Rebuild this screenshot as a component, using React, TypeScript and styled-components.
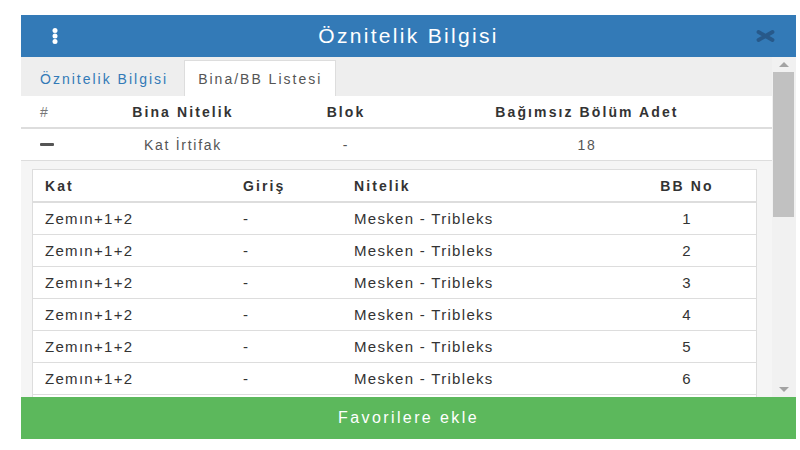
import styled, { createGlobalStyle } from 'styled-components';

const GlobalStyle = createGlobalStyle`
  html, body {
    margin: 0;
    padding: 0;
    background: #fff;
  }
  body {
    font-family: 'Liberation Sans', Arial, Helvetica, sans-serif;
    color: #333;
  }
`;

const Page = styled.div`
  padding: 15px 4px 0 21px;
`;

const Modal = styled.div`
  width: 775px;
  display: flex;
  flex-direction: column;
  background: #fff;
`;

const Header = styled.div`
  height: 42px;
  display: grid;
  grid-template-columns: 68px 1fr 68px;
  align-items: center;
  background: #337ab7;
  color: #fff;
`;

const Title = styled.h4`
  margin: 0;
  text-align: center;
  font-size: 21px;
  font-weight: normal;
  letter-spacing: 2.3px;
`;

const IconSlot = styled.div<{ $end?: boolean }>`
  display: flex;
  justify-content: ${p => (p.$end ? 'flex-end' : 'center')};
  padding-right: ${p => (p.$end ? '21px' : '0')};
  align-items: center;
`;

const Body = styled.div`
  height: 340px;
  display: flex;
`;

const Content = styled.div`
  flex: 1;
  overflow-y: auto;
  scrollbar-width: none;
`;

const TabBar = styled.div`
  height: 39px;
  background: #eee;
  display: flex;
  align-items: flex-end;
  padding-left: 5px;
`;

const Tab = styled.div<{ $active?: boolean }>`
  height: 36px;
  display: flex;
  align-items: center;
  padding: 0 13px;
  margin-right: 2px;
  font-size: 14px;
  letter-spacing: 2px;
  box-sizing: border-box;
  color: ${p => (p.$active ? '#555' : '#337ab7')};
  background: ${p => (p.$active ? '#fff' : 'transparent')};
  border: 1px solid ${p => (p.$active ? '#ddd' : 'transparent')};
  border-bottom: none;
`;

const OuterRow = styled.div<{ $head?: boolean }>`
  display: grid;
  grid-template-columns: 90px 144px 182px 300px;
  align-items: center;
  height: 31px;
  border-bottom: ${p => (p.$head ? '2px' : '1px')} solid #ddd;
  font-size: 14px;
  letter-spacing: ${p => (p.$head ? '2.1px' : '1.7px')};
  font-weight: ${p => (p.$head ? 'bold' : 'normal')};
  color: ${p => (p.$head ? '#333' : '#555')};
`;

const OuterCell = styled.div<{ $left?: boolean }>`
  padding-left: ${p => (p.$left ? '19px' : '0')};
  display: flex;
  justify-content: ${p => (p.$left ? 'flex-start' : 'center')};
  align-items: center;
  white-space: nowrap;
`;

const HashMark = styled.span`
  color: #777;
  font-weight: normal;
`;

const Minus = styled.span`
  display: block;
  width: 14px;
  height: 3px;
  background: #555;
  border-radius: 1px;
`;

const Panel = styled.div`
  background: #f5f5f5;
  padding: 8px 15px 8px 11px;
`;

const InnerTable = styled.div`
  background: #fff;
  border: 1px solid #ddd;
`;

const InnerRow = styled.div<{ $head?: boolean }>`
  display: grid;
  grid-template-columns: 198px 111px 276px 1fr;
  align-items: center;
  height: 31px;
  border-bottom: ${p => (p.$head ? '2px' : '1px')} solid #ddd;
  font-size: ${p => (p.$head ? '14px' : '15px')};
  letter-spacing: ${p => (p.$head ? '2.1px' : '1.3px')};
  font-weight: ${p => (p.$head ? 'bold' : 'normal')};
  color: #333;
`;

const InnerCell = styled.div<{ $center?: boolean }>`
  padding: ${p => (p.$center ? '0' : '0 12px')};
  text-align: ${p => (p.$center ? 'center' : 'left')};
  white-space: nowrap;
`;

const Scrollbar = styled.div`
  width: 24px;
  background: #f1f1f1;
  display: flex;
  flex-direction: column;
`;

const ScrollArrow = styled.div`
  height: 15px;
  display: flex;
  align-items: center;
  justify-content: center;
`;

const Thumb = styled.div`
  height: 145px;
  margin: 0 2px 0 1px;
  background: #c1c1c1;
`;

const Spacer = styled.div`
  flex: 1;
`;

const FavButton = styled.button`
  height: 42px;
  border: none;
  background: #5cb85c;
  color: #fff;
  font-family: inherit;
  font-size: 16px;
  letter-spacing: 2.4px;
  cursor: pointer;
`;

const rows = Array.from({ length: 18 }, (_, i) => ({
  kat: 'Zemın+1+2',
  giris: '-',
  nitelik: 'Mesken - Tribleks',
  no: i + 1,
}));

const Kebab = () => (
  <svg width="8" height="16" viewBox="0 0 8 16">
    <circle cx="4" cy="2.5" r="2.5" fill="#fff" />
    <circle cx="4" cy="8" r="2.5" fill="#fff" />
    <circle cx="4" cy="13.5" r="2.5" fill="#fff" />
  </svg>
);

const CloseIcon = () => (
  <svg width="19" height="12" viewBox="0 0 19 12">
    <path d="M2.5 2 L16.5 10 M16.5 2 L2.5 10" stroke="#27598a" strokeWidth="3.8" strokeLinecap="round" />
  </svg>
);

const Arrow = ({ up }: { up?: boolean }) => (
  <svg width="10" height="5" viewBox="0 0 10 5">
    <path d={up ? 'M0 5 L5 0 L10 5 Z' : 'M0 0 L5 5 L10 0 Z'} fill="#a3a3a3" />
  </svg>
);

export default function App() {
  return (
    <>
      <GlobalStyle />
      <Page>
        <Modal>
          <Header>
            <IconSlot>
              <Kebab />
            </IconSlot>
            <Title>Öznitelik Bilgisi</Title>
            <IconSlot $end>
              <CloseIcon />
            </IconSlot>
          </Header>

          <Body>
            <Content>
              <TabBar>
                <Tab>Öznitelik Bilgisi</Tab>
                <Tab $active>Bina/BB Listesi</Tab>
              </TabBar>

              <OuterRow $head>
                <OuterCell $left>
                  <HashMark>#</HashMark>
                </OuterCell>
                <OuterCell>Bina Nitelik</OuterCell>
                <OuterCell>Blok</OuterCell>
                <OuterCell>Bağımsız Bölüm Adet</OuterCell>
              </OuterRow>
              <OuterRow>
                <OuterCell $left>
                  <Minus />
                </OuterCell>
                <OuterCell>Kat İrtifak</OuterCell>
                <OuterCell>-</OuterCell>
                <OuterCell>18</OuterCell>
              </OuterRow>

              <Panel>
                <InnerTable>
                  <InnerRow $head>
                    <InnerCell>Kat</InnerCell>
                    <InnerCell>Giriş</InnerCell>
                    <InnerCell>Nitelik</InnerCell>
                    <InnerCell $center>BB No</InnerCell>
                  </InnerRow>
                  {rows.map(r => (
                    <InnerRow key={r.no}>
                      <InnerCell>{r.kat}</InnerCell>
                      <InnerCell>{r.giris}</InnerCell>
                      <InnerCell>{r.nitelik}</InnerCell>
                      <InnerCell $center>{r.no}</InnerCell>
                    </InnerRow>
                  ))}
                </InnerTable>
              </Panel>
            </Content>

            <Scrollbar>
              <ScrollArrow>
                <Arrow up />
              </ScrollArrow>
              <Thumb />
              <Spacer />
              <ScrollArrow>
                <Arrow />
              </ScrollArrow>
            </Scrollbar>
          </Body>

          <FavButton>Favorilere ekle</FavButton>
        </Modal>
      </Page>
    </>
  );
}
